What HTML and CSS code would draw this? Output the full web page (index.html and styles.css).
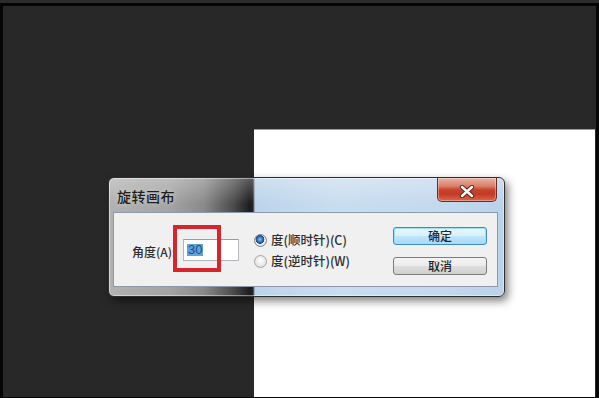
FILE: index.html
```html
<!DOCTYPE html>
<html lang="zh-CN">
<head>
<meta charset="utf-8">
<title>旋转画布</title>
<link rel="stylesheet" href="styles.css">
</head>
<body>
<div class="frame">
  <div class="canvas"></div>
</div>

<div class="dialog">
  <div class="titlebar">
    <span class="title">旋转画布</span>
    <span class="close">
      <svg width="16" height="13" viewBox="0 0 16 13">
        <path d="M3 2 L13 11 M13 2 L3 11" stroke="#6a2418" stroke-width="4.4" stroke-linecap="round"/>
        <path d="M3 2 L13 11 M13 2 L3 11" stroke="#ffffff" stroke-width="2.4" stroke-linecap="round"/>
      </svg>
    </span>
  </div>
  <div class="panel">
    <span class="label">角度(A):</span>
    <span class="input"><span class="sel">30</span></span>
    <div class="radios">
      <div class="radio-row"><span class="radio checked"></span><span class="rtext">度(顺时针)(C)</span></div>
      <div class="radio-row"><span class="radio"></span><span class="rtext">度(逆时针)(W)</span></div>
    </div>
    <div class="buttons">
      <span class="btn default">确定</span>
      <span class="btn">取消</span>
    </div>
  </div>
  <div class="mark"></div>
</div>
</body>
</html>
```

FILE: styles.css
```css
html, body {
  margin: 0;
  padding: 0;
}
body {
  width: 599px;
  height: 398px;
  overflow: hidden;
  background: #2c2c2c;
  font-family: "Noto Sans CJK SC", "Noto Sans", sans-serif;
  position: relative;
}
.frame {
  margin-top: 3px;
  box-sizing: border-box;
  height: 395px;
  border-style: solid;
  border-color: #050505;
  border-width: 3px 3px 1px 3px;
  background: #282828;
  display: grid;
  grid-template-columns: 251px 1fr;
  grid-template-rows: 123px 1fr;
}
.canvas {
  grid-column: 2;
  grid-row: 2;
  background: #ffffff;
  border-top: 1px solid #9a9a9a;
  margin-right: 1px;
}

.dialog {
  position: absolute;
  left: 108px;
  top: 177px;
  width: 397px;
  height: 120px;
  box-sizing: border-box;
  border: 1px solid #2e2e2e;
  border-radius: 6px;
  background:
    linear-gradient(to bottom, rgba(255,255,255,0.28), rgba(255,255,255,0) 26px),
    linear-gradient(to right, #b2b2b2 0px, #a4a4a4 60px, #8a8a8a 95px, #4a4a4a 125px, #1c1c1c 141px, #262626 144px, #bcd4ea 146px, #c9ddf0 230px, #c4d9ee 330px, #bad2ea 100%);
  box-shadow: 3px 4px 9px rgba(0,0,0,0.5), inset 0 0 0 1px rgba(255,255,255,0.45);
  display: flex;
  flex-direction: column;
}
.titlebar {
  height: 34px;
  display: flex;
  align-items: flex-start;
}
.title {
  margin-left: 8px;
  margin-top: 10px;
  font-size: 14px;
  line-height: 16px;
  font-weight: 500;
  color: #1e1e1e;
  letter-spacing: 0.5px;
  text-shadow: 0 0 5px rgba(255,255,255,0.5);
}
.close {
  margin-left: auto;
  margin-right: 7px;
  width: 60px;
  height: 24px;
  box-sizing: border-box;
  border: 1px solid #6e2a20;
  border-top: none;
  border-radius: 0 0 5px 5px;
  background: linear-gradient(to bottom, #e9b4a6 0%, #dc7f6a 35%, #c8412c 52%, #c43a26 70%, #d66a4e 100%);
  box-shadow: inset 0 0 0 1px rgba(255,255,255,0.35);
  display: flex;
  align-items: center;
  justify-content: center;
  padding-top: 3px;
}
.close svg { display: block; }

.panel {
  flex: 1;
  margin: 0 6px 9px 4px;
  background: #f0f0f0;
  border: 1px solid #8c9aa8;
  display: flex;
  align-items: center;
  padding: 0 10px 0 18px;
  font-size: 12px;
  font-weight: 500;
  color: #2e2e2e;
}
.label {
  width: 51px;
  line-height: 16px;
  margin-top: 4px;
}
.input {
  width: 56px;
  height: 22px;
  box-sizing: border-box;
  background: #ffffff;
  border: 1px solid #b4b6bb;
  border-top-color: #9a9ca2;
  display: flex;
  align-items: center;
  padding-left: 3px;
}
.sel {
  background: #5ea2de;
  color: #1f4f80;
  line-height: 12px;
  padding: 0 1px;
  font-family: "Liberation Sans", sans-serif;
  font-size: 13px;
  margin-top: 1px;
}
.radios {
  margin-left: 15px;
  display: flex;
  flex-direction: column;
  gap: 4px;
  margin-top: 2px;
}
.radio-row {
  display: flex;
  align-items: center;
  height: 17px;
}
.radio {
  width: 13px;
  height: 13px;
  box-sizing: border-box;
  border-radius: 50%;
  border: 1px solid #a6a6a6;
  background: radial-gradient(circle at 50% 40%, #ffffff, #e2e2e2 70%, #cfcfcf);
  margin-right: 4px;
}
.radio.checked {
  border-color: #7a8796;
  background: radial-gradient(circle at 45% 40%, #9ac6ec 0, #2a6cb0 32%, #1a4c86 46%, #e8edf2 52%, #c8ced6 100%);
}
.rtext {
  font-size: 12.5px;
  line-height: 16px;
  white-space: nowrap;
}
.buttons {
  margin-left: auto;
  display: flex;
  flex-direction: column;
  gap: 12px;
  margin-top: 3px;
}
.btn {
  width: 94px;
  height: 18px;
  box-sizing: border-box;
  border: 1px solid #7c7c7c;
  border-radius: 3px;
  background: linear-gradient(to bottom, #f4f4f4 0%, #ebebeb 48%, #dddddd 52%, #d0d0d0 100%);
  display: flex;
  align-items: center;
  justify-content: center;
  font-size: 12px;
  line-height: 14px;
  color: #262626;
}
.btn.default {
  border-color: #3c8cc0;
  background: linear-gradient(to bottom, #eaf6fd 0%, #d9f0fc 48%, #bee6fd 52%, #a7d9f5 100%);
  box-shadow: inset 0 0 0 1px #9fe0f8;
}
.mark {
  position: absolute;
  left: 64px;
  top: 47px;
  width: 48px;
  height: 47px;
  box-sizing: border-box;
  border: 4px solid #d6252c;
}
```
